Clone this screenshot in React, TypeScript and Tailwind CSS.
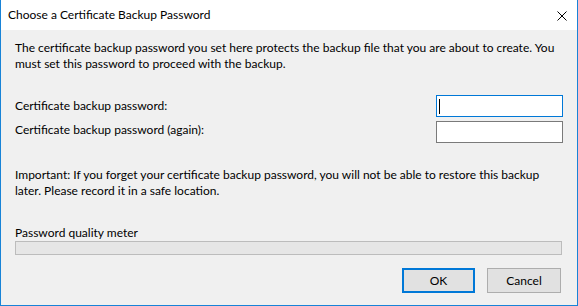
export default function App() {
  return (
    <div className="w-[578px] h-[306px] flex flex-col border-x border-b border-[#1883d7] bg-[#f0f0f0] font-['Lato',sans-serif] text-[12px] leading-[16px] text-black overflow-hidden">
      {/* Title bar */}
      <div className="h-[30px] shrink-0 bg-white flex items-center justify-between pl-[7px] pr-[10px]">
        <span className="text-[12px]">Choose a Certificate Backup Password</span>
        <svg width="10" height="10" viewBox="0 0 10 10" className="mt-[1px]">
          <path d="M0.5 0.5 L9.5 9.5 M9.5 0.5 L0.5 9.5" stroke="#000" strokeWidth="1" />
        </svg>
      </div>

      {/* Body */}
      <div className="flex-1 flex flex-col pl-[14px] pr-[14px] pt-[10px] whitespace-nowrap">
        <p>
          The certificate backup password you set here protects the backup file that you are about to create. You
          <br />
          must set this password to proceed with the backup.
        </p>

        <div className="mt-[23px] flex items-center justify-between h-[22px]">
          <span>Certificate backup password:</span>
          <div className="w-[127px] h-[22px] bg-white border border-[#0078d7] flex items-center pl-[2px]">
            <div className="w-[1px] h-[15px] bg-black" />
          </div>
        </div>
        <div className="mt-[4px] flex items-start justify-between h-[22px]">
          <span className="pt-[1px]">Certificate backup password (again):</span>
          <div className="w-[127px] h-[22px] bg-white border border-[#7a7a7a]" />
        </div>

        <p className="mt-[24px]">
          Important: If you forget your certificate backup password, you will not be able to restore this backup
          <br />
          later. Please record it in a safe location.
        </p>

        <span className="mt-[26px]">Password quality meter</span>
        <div className="w-[547px] h-[14px] bg-[#e6e6e6] border border-[#bcbcbc]" />

        <div className="mt-[13px] flex justify-end gap-[12px] pr-[2px]">
          <button className="w-[73px] h-[25px] bg-[#e1e1e1] border-2 border-[#0078d7] text-[12px] leading-none">
            OK
          </button>
          <button className="w-[74px] h-[25px] bg-[#e1e1e1] border border-[#adadad] text-[12px] leading-none">
            Cancel
          </button>
        </div>
      </div>
    </div>
  )
}
